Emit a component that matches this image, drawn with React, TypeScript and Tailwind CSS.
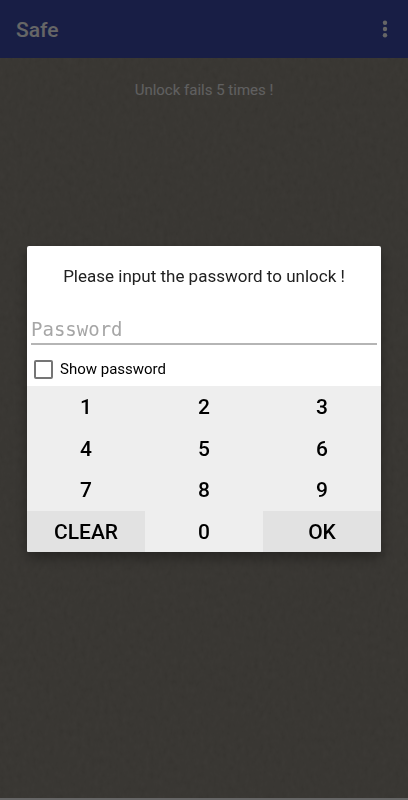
import { useState } from 'react';
import type { FormEvent } from 'react';

const DIGITS = ['1', '2', '3', '4', '5', '6', '7', '8', '9'];

function AppBar() {
  return (
    <header className="flex h-[58px] items-center justify-between bg-[#3c4dad] pr-[11px] pl-4 text-white">
      <h1 className="pt-0.5 text-[21px] leading-6 font-medium">Safe</h1>
      <button type="button" aria-label="More options" className="flex h-6 w-6 items-center justify-center">
        <svg viewBox="0 0 24 24" className="h-6 w-6" fill="currentColor" aria-hidden="true">
          <circle cx="12" cy="5.8" r="2.2" />
          <circle cx="12" cy="12" r="2.2" />
          <circle cx="12" cy="18.2" r="2.2" />
        </svg>
      </button>
    </header>
  );
}

function Grain() {
  return (
    <svg className="absolute inset-0 h-full w-full opacity-10" aria-hidden="true">
      <filter id="grain">
        <feTurbulence type="fractalNoise" baseFrequency="0.22 0.14" numOctaves="3" seed="4" />
        <feColorMatrix type="saturate" values="0" />
        <feComponentTransfer>
          <feFuncA type="linear" slope="0" intercept="1" />
        </feComponentTransfer>
      </filter>
      <rect width="100%" height="100%" filter="url(#grain)" />
    </svg>
  );
}

function UnlockDialog() {
  const [password, setPassword] = useState('');
  const [visible, setVisible] = useState(false);

  const handleSubmit = (e: FormEvent) => {
    e.preventDefault();
    setPassword('');
  };

  const digitClass = 'pt-0.5 text-[21px] font-medium active:bg-[#d5d5d5]';
  const actionClass = 'bg-[#e2e2e2] pt-0.5 text-[21px] font-medium active:bg-[#d5d5d5]';

  return (
    <form
      role="dialog"
      aria-modal="true"
      aria-labelledby="unlock-title"
      onSubmit={handleSubmit}
      className="w-full overflow-hidden rounded-xs bg-white text-black shadow-[0_6px_14px_rgba(0,0,0,0.35)]"
    >
      <h2 id="unlock-title" className="pt-[18px] text-center text-[17px] leading-6 font-normal text-[#212121]">
        Please input the password to unlock !
      </h2>

      <div className="px-1 pt-[26px]">
        <input
          type={visible ? 'text' : 'password'}
          value={password}
          onChange={(e) => setPassword(e.target.value)}
          placeholder="Password"
          aria-label="Password"
          className="block h-[31px] w-full border-b-2 border-[#b5b5b5] font-['DejaVu_Sans_Mono',monospace] text-[19px] outline-none placeholder:text-[#a6a6a6] focus:border-[#3f51b5]"
        />
      </div>

      <label className="flex h-[41px] items-center gap-[7px] px-[7px] pt-2 text-[15px]">
        <input
          type="checkbox"
          checked={visible}
          onChange={(e) => setVisible(e.target.checked)}
          className="h-[19px] w-[19px] appearance-none rounded-xs border-2 border-[#757575] checked:border-[#3f51b5] checked:bg-[#3f51b5]"
        />
        Show password
      </label>

      <div className="grid h-[166px] grid-cols-3 grid-rows-4 bg-[#eeeeee]">
        {DIGITS.map((digit) => (
          <button key={digit} type="button" onClick={() => setPassword(password + digit)} className={digitClass}>
            {digit}
          </button>
        ))}
        <button type="button" onClick={() => setPassword('')} className={actionClass}>
          CLEAR
        </button>
        <button type="button" onClick={() => setPassword(password + '0')} className={digitClass}>
          0
        </button>
        <button type="submit" className={actionClass}>
          OK
        </button>
      </div>
    </form>
  );
}

export default function App() {
  return (
    <div className="flex min-h-screen flex-col font-[Roboto,sans-serif]">
      <AppBar />
      <main className="relative grow border-b-2 border-white bg-[#8b857a]">
        <Grain />
        <p className="relative pt-5 text-center text-[15px] leading-6 text-[#f0f0f0]">Unlock fails 5 times !</p>
      </main>
      <div className="fixed inset-0 flex items-center justify-center bg-black/60 px-[27px] pb-0.5">
        <UnlockDialog />
      </div>
    </div>
  );
}
